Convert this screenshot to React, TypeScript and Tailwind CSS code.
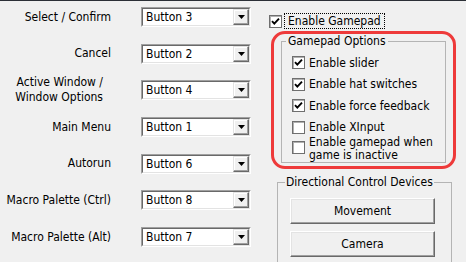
import React from "react";

const font = { fontFamily: '"DejaVu Sans Condensed", "Liberation Sans", sans-serif' };

function Check({ checked }: { checked: boolean }) {
  return (
    <div className="w-[13px] h-[13px] shrink-0 border border-[#6f6f6f] bg-white shadow-[inset_1px_1px_0_#b0b0b0] flex items-center justify-center">
      {checked && (
        <svg width="11" height="11" viewBox="0 0 11 11">
          <path d="M2 5.2 L4.3 7.6 L9 2.6" fill="none" stroke="#000" strokeWidth="1.9" />
        </svg>
      )}
    </div>
  );
}

function Dropdown({ value }: { value: string }) {
  return (
    <div className="w-[110px] h-[20px] border-t border-l border-[#a0a0a0] border-b-white border-r-white border-b border-r">
      <div className="w-full h-full border-t border-l border-[#696969] border-b border-r border-b-[#e3e3e3] border-r-[#e3e3e3] bg-white flex items-center justify-between">
        <span className="pl-[3px] text-[12px] leading-none text-black">{value}</span>
        <div className="w-[16px] h-[16px] bg-[#f0f0f0] border-t border-l border-t-[#e3e3e3] border-l-[#e3e3e3] border-b border-r border-b-[#696969] border-r-[#696969] shadow-[inset_-1px_-1px_0_#a0a0a0,inset_1px_1px_0_#ffffff] flex items-center justify-center">
          <svg width="7" height="4" viewBox="0 0 7 4">
            <path d="M0 0 H7 L3.5 4 Z" fill="#000" />
          </svg>
        </div>
      </div>
    </div>
  );
}

const rows: { label: React.ReactNode; value: string; pr?: boolean }[] = [
  { label: "Select / Confirm", value: "Button 3" },
  { label: "Cancel", value: "Button 2" },
  { label: (<>Active Window /<br />Window Options</>), value: "Button 4", pr: true },
  { label: "Main Menu", value: "Button 1" },
  { label: "Autorun", value: "Button 6" },
  { label: "Macro Palette (Ctrl)", value: "Button 8" },
  { label: "Macro Palette (Alt)", value: "Button 7" },
];

function WinButton({ children }: { children: React.ReactNode }) {
  return (
    <div className="w-[145px] h-[26px] bg-[#f0f0f0] border-t border-l border-t-white border-l-white border-b border-r border-b-[#696969] border-r-[#696969] shadow-[inset_-1px_-1px_0_#a0a0a0,inset_1px_1px_0_#e3e3e3] flex items-center justify-center text-[12px] text-black">
      {children}
    </div>
  );
}

export default function App() {
  return (
    <div
      className="w-[466px] h-[262px] bg-[#f0f0f0] border-t border-[#2b2f36] flex overflow-hidden text-[#000]"
      style={font}
    >
      <div className="w-[269px] shrink-0 flex flex-col pt-[6px] gap-[16.7px]">
        {rows.map((r, i) => (
          <div key={i} className="flex items-center h-[20px]">
            <div
              className={`w-[111px] flex justify-end text-right text-[12px] leading-[15px] ${r.pr ? "pr-[8px]" : ""}`}
            >
              <span>{r.label}</span>
            </div>
            <div className="ml-[30px]">
              <Dropdown value={r.value} />
            </div>
          </div>
        ))}
      </div>

      <div className="relative flex-1 flex flex-col">
        <div className="flex items-center h-[16px] mt-[12px]">
          <Check checked />
          <span className="ml-[2px] px-[3px] border border-dotted border-[#000] text-[12px] leading-[14px]">
            Enable Gamepad
          </span>
        </div>

        <fieldset className="ml-[12px] w-[165px] mt-[5px] border border-[#b4b4b4] p-0">
          <legend className="ml-[4px] px-[2px] text-[12px] leading-[15px]">Gamepad Options</legend>
          <div className="px-[10px] pt-[3px]">
            {[
              ["Enable slider", true],
              ["Enable hat switches", true],
              ["Enable force feedback", true],
              ["Enable XInput", false],
            ].map(([t, c]) => (
              <div key={t as string} className="flex items-center h-[21.5px]">
                <Check checked={c as boolean} />
                <span className="ml-[4px] text-[12px] leading-none">{t as string}</span>
              </div>
            ))}
            <div className="flex items-start -mt-[2px]">
              <div className="mt-[5px]">
                <Check checked={false} />
              </div>
              <span className="ml-[4px] text-[12px] leading-[13px]">
                Enable gamepad when
                <br />
                game is inactive
              </span>
            </div>
          </div>
        </fieldset>

        <fieldset className="ml-[8px] w-[175px] mt-[12px] border border-[#b4b4b4] p-0">
          <legend className="ml-[7px] px-[1px] text-[12px] leading-[15px]">Directional Control Devices</legend>
          <div className="pl-[12px] pt-[8px] pb-[10px] flex flex-col gap-[7px]">
            <WinButton>Movement</WinButton>
            <WinButton>Camera</WinButton>
          </div>
        </fieldset>

        <div className="absolute left-[2px] top-[30px] w-[185px] h-[138px] border-[3px] border-[#ee3a3a] rounded-[14px] pointer-events-none" />
      </div>
    </div>
  );
}
